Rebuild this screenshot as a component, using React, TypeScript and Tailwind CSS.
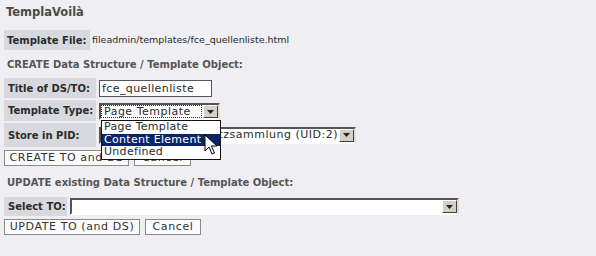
import React from "react";

const Arrow = () => (
  <div className="w-[15px] h-full bg-[#d4d0c8] border border-t-white border-l-white border-r-[#404040] border-b-[#404040] flex items-center justify-center shrink-0">
    <svg width="7" height="4" viewBox="0 0 7 4"><path d="M0 0h7L3.5 4z" fill="#222" /></svg>
  </div>
);

const Select = ({ w, text, dotted }: { w: string; text: string; dotted?: boolean }) => (
  <div className={`${w} h-[17px] bg-white border-2 border-t-[#555] border-l-[#555] border-r-[#ddd] border-b-[#fff] flex items-stretch`}>
    <div className="flex-1 min-w-0 flex items-center pl-[1px] pr-[2px] overflow-hidden whitespace-nowrap">
      <span className={dotted ? "flex-1 outline outline-1 outline-dotted outline-[#333] pl-[2px] leading-[11px]" : "pl-[2px] leading-[12px]"}>{text}</span>
    </div>
    <Arrow />
  </div>
);

const Button = ({ children, w }: { children: React.ReactNode; w: string }) => (
  <div className={`${w} h-[16px] bg-[#fbfbfb] border border-[#8a8a8a] flex items-center justify-center text-[11px] text-[#333] tracking-[0.6px]`}>
    {children}
  </div>
);

export default function App() {
  return (
    <div className="w-[596px] h-[256px] bg-[#eeeef3] relative overflow-hidden font-['DejaVu_Sans',sans-serif] text-[#2b2b2b]">
      <div className="pl-[6px] pt-[4px] text-[11.5px] leading-[16px] font-bold text-[#4a4a4a]">TemplaVoilà</div>

      <div className="mt-[10px] ml-[4px] flex items-center h-[20px]">
        <div className="w-[86px] bg-[#d8d8df] h-full pl-[3px] flex items-center font-bold text-[10px] whitespace-nowrap">Template File:</div>
        <div className="pl-[2px] text-[9.5px]">fileadmin/templates/fce_quellenliste.html</div>
      </div>

      <div className="mt-[7px] ml-[7px] h-[14px] flex items-center text-[10px] font-bold text-[#555]">
        CREATE Data Structure / Template Object:
      </div>

      <div className="mt-[7px] ml-[4px] flex flex-col gap-[2px]">
        <div className="flex items-center h-[20px] gap-[3px]">
          <div className="w-[92px] h-full bg-[#d8d8df] pl-[4px] flex items-center font-bold text-[10px]">Title of DS/TO:</div>
          <div className="w-[113px] h-[17px] bg-white border border-[#555] flex items-center pl-[2px] text-[11px] tracking-[0.4px] leading-none">fce_quellenliste</div>
        </div>
        <div className="flex items-center h-[21px] gap-[3px]">
          <div className="w-[92px] h-full bg-[#d8d8df] pl-[4px] flex items-center font-bold text-[10px]">Template Type:</div>
          <div className="text-[11px] tracking-[0.5px] mt-[2px]"><Select w="w-[121px]" text="Page Template" dotted /></div>
        </div>
        <div className="flex items-center h-[24px] gap-[3px]">
          <div className="w-[92px] h-full bg-[#d8d8df] pl-[4px] flex items-center font-bold text-[10px]">Store in PID:</div>
          <div className="text-[11px] tracking-[0.5px]"><Select w="w-[257px]" text="Quellen — Datensatzsammlung (UID:2)" /></div>
        </div>
      </div>

      <div className="mt-[3px] ml-[4px] flex gap-[5px]">
        <Button w="w-[125px]">CREATE TO and DS</Button>
        <Button w="w-[57px]">Cancel</Button>
      </div>

      <div className="mt-[9px] ml-[7px] h-[14px] flex items-center text-[10px] font-bold text-[#555]">
        UPDATE existing Data Structure / Template Object:
      </div>

      <div className="mt-[8px] ml-[4px] flex items-center h-[19px] gap-[3px]">
        <div className="w-[63px] h-full bg-[#d8d8df] pl-[4px] flex items-center font-bold text-[10px]">Select TO:</div>
        <div className="text-[11px]"><Select w="w-[389px]" text="" /></div>
      </div>

      <div className="mt-[3px] ml-[4px] flex gap-[5px]">
        <Button w="w-[136px]">UPDATE TO (and DS)</Button>
        <Button w="w-[56px]">Cancel</Button>
      </div>

      {/* open dropdown list overlay */}
      <div className="absolute left-[101px] top-[120px] w-[120px] bg-white border border-[#111] text-[11px] leading-[12.5px] tracking-[0.3px]">
        <div className="pl-[2px] h-[12.5px]">Page Template</div>
        <div className="pl-[2px] h-[12.5px] bg-[#0a246a] text-white">Content Element</div>
        <div className="pl-[2px] h-[12.5px]">Undefined</div>
      </div>

      {/* mouse cursor */}
      <svg className="absolute left-[204px] top-[134px]" width="14" height="22" viewBox="0 0 14 22">
        <path d="M1 1 L1 17 L5 13 L8 20 L10.5 19 L7.5 12 L13 12 Z" fill="#fff" stroke="#000" strokeWidth="1" strokeLinejoin="miter" />
      </svg>
    </div>
  );
}
